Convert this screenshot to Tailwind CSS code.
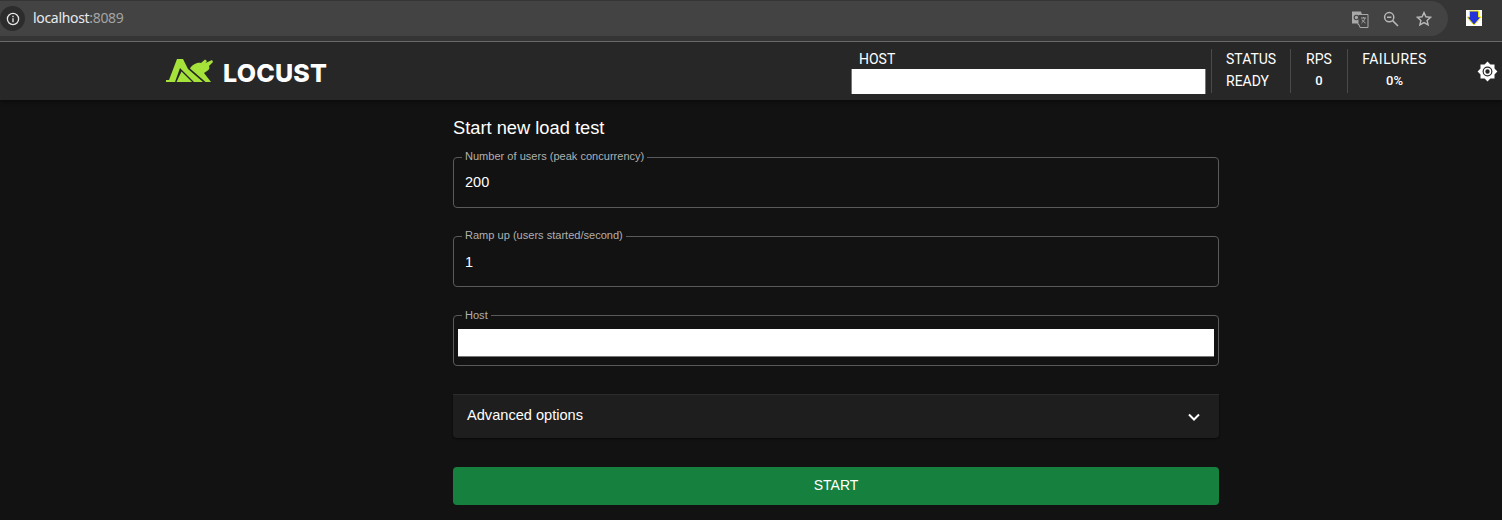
<!DOCTYPE html>
<html lang="en">
<head>
    <meta charset="UTF-8">
    <title>Locust</title>
    <script src="https://cdn.jsdelivr.net/npm/@tailwindcss/browser@4"></script>
</head>
<body class="w-[1502px] h-[520px] overflow-hidden bg-[#121212] text-white font-['Roboto',sans-serif]">

    <!-- browser bar -->
    <div class="h-[42px] bg-[#353535] border-b border-[#6e6e6e] pt-px flex">
        <div class="w-[1448px] h-[35px] bg-[#434343] rounded-r-[18px] flex items-center">
            <div class="w-[25px] h-[25px] rounded-full bg-[#2c2c2c] flex items-center justify-center">
                <svg width="14" height="14" viewBox="0 0 14 14" fill="none" stroke="#e8e8e8" stroke-width="1.3">
                    <circle cx="7" cy="7" r="5.6"/>
                    <path d="M7 6.2V10.2M7 3.8V5.2"/>
                </svg>
            </div>
            <span class="ml-[8px] -mt-[2px] text-[14px] font-['Noto_Sans',sans-serif] text-[#e8eaed] tracking-[-0.32px]">localhost<span class="text-[#a3a3a3]">:8089</span></span>
            <div class="ml-auto flex items-center">
                <svg width="18" height="18" viewBox="0 0 18 18" class="mr-[14px]">
                    <path d="M1 1.500h9l1 3h-1v9H1z" fill="#a8a8a8"/>
                    <path d="M7 4.500h10v13H9l-1-3H7z" fill="#434343" stroke="#a8a8a8" stroke-width="1"/>
                    <path d="M10 8h5M12.500 7v1M14 8c-.5 2-2 4-3.500 5M11 9.500c.8 1.500 2 2.800 3.500 3.500" stroke="#a8a8a8" stroke-width="1" fill="none"/>
                    <circle cx="5.400" cy="7.500" r="2.200" fill="none" stroke="#434343" stroke-width="1.100"/>
                </svg>
                <svg width="16" height="16" viewBox="0 0 16 16" fill="none" stroke="#b8b8b8" stroke-width="1.5" class="mr-[17px]">
                    <circle cx="6.200" cy="6.200" r="4.600"/>
                    <path d="M9.600 9.600L15 15M4 6.200h4.400"/>
                </svg>
                <svg width="16" height="16" viewBox="0 0 16 16" fill="none" stroke="#b8b8b8" stroke-width="1.4" class="mr-[16px]">
                    <path d="M8 1.600l1.900 4.200 4.600.5-3.400 3.100 1 4.500L8 11.600l-4.100 2.300 1-4.500L1.500 6.300l4.600-.5z"/>
                </svg>
            </div>
        </div>
        <svg width="16" height="16" viewBox="0 0 16 16" class="ml-[18px] mt-[9px]">
            <rect width="16" height="16" fill="#fff"/>
            <path d="M3.500 1h9v6h2.500L8 15 1 7h2.500z" fill="#2534d8" stroke="#f4e600" stroke-width="1"/>
        </svg>
    </div>

    <!-- app header -->
    <header class="h-[58px] bg-[#272727] flex items-center shadow-[0_2px_4px_rgba(0,0,0,0.4)]">
        <div class="ml-[166px] flex items-center w-[685px]">
            <svg width="48" height="24" viewBox="0 0 48 24" fill="#a6e33a">
                <path d="M11 0H17L22 10 37 23H28L14 9 9 23H0V21H3Z"/>
                <path d="M15.500 12.500L26 23H10.500Z"/>
                <path d="M24 9.500C26 6 31 3 35 4L39 .5 41 2 39.500 4 46 1 47 3 43 7C44 9 43 11 41 12L38 14 45 23H39.500Z"/>
            </svg>
            <span class="ml-[9px] mt-[5px] text-[25px] leading-none font-extrabold font-['Inter',sans-serif] tracking-[0.2px]">LOCUST</span>
        </div>
        <div class="w-[355px] h-[50px] flex flex-col">
            <span class="ml-2 text-[14px] leading-[20px] mt-[3px]">HOST</span>
            <div class="h-[25px] bg-white border-x border-[#777]"></div>
        </div>
        <div class="ml-[5px] h-[44px] border-l border-[#4a4a4a] w-[79px] pl-[14px] text-[14px] leading-[22px]">
            <p class="-mt-px">STATUS</p>
            <p>READY</p>
        </div>
        <div class="h-[44px] border-l border-[#4a4a4a] w-[57px] text-center text-[14px] leading-[22px]">
            <p class="-mt-px">RPS</p>
            <p class="text-[13px] font-medium">0</p>
        </div>
        <div class="h-[44px] border-l border-[#4a4a4a] w-[94px] text-center text-[14px] leading-[22px]">
            <p class="-mt-px tracking-[0.5px]">FAILURES</p>
            <p class="text-[13px] font-medium">0%</p>
        </div>
        <svg width="21" height="21" viewBox="0 0 24 24" class="ml-[36px]">
            <path fill="#fff" d="M20 8.690V4h-4.690L12 .69 8.690 4H4v4.690L.69 12 4 15.310V20h4.690L12 23.310 15.310 20H20v-4.690L23.310 12 20 8.690z"/>
            <circle cx="12" cy="12" r="5.600" fill="#272727"/>
            <circle cx="12" cy="12" r="3.400" fill="none" stroke="#fff" stroke-width="1.800"/>
        </svg>
    </header>

    <!-- form -->
    <main class="w-[766px] ml-[453px] font-['Liberation_Sans',sans-serif]">
        <h1 class="mt-[17px] text-[18.300px] leading-[22px]">Start new load test</h1>

        <fieldset class="mt-[12px] h-[57px] border border-[#5a5a5a] rounded px-[8px]">
            <legend class="px-[3px] text-[11.050px] leading-[13px] text-[#b0b0b0] -translate-y-px">Number of users (peak concurrency)</legend>
            <p class="ml-[3px] mt-[8px] text-[14.500px] leading-[20px]">200</p>
        </fieldset>

        <fieldset class="mt-[22px] h-[57px] border border-[#5a5a5a] rounded px-[8px]">
            <legend class="px-[3px] text-[11.050px] leading-[13px] text-[#b0b0b0] -translate-y-px">Ramp up (users started/second)</legend>
            <p class="ml-[3px] mt-[9px] text-[14.500px] leading-[20px]">1</p>
        </fieldset>

        <fieldset class="mt-[22px] h-[57px] border border-[#5a5a5a] rounded px-[4px]">
            <legend class="ml-[4px] px-[3px] text-[11.050px] leading-[13px] text-[#b0b0b0]">Host</legend>
            <div class="mt-[7px] h-[28px] bg-white border-b border-[#777]"></div>
        </fieldset>

        <div class="mt-[28px] h-[44px] bg-[#1e1e1e] border-t border-[#2c2c2c] rounded-b flex items-center justify-between pl-[14px] pr-[18px] shadow-[0_1px_2px_rgba(0,0,0,0.5)]">
            <span class="text-[14.600px] -mt-[2px]">Advanced options</span>
            <svg width="14" height="14" viewBox="0 0 14 14" fill="none" stroke="#fff" stroke-width="2">
                <path d="M2 4.500l5 5 5-5"/>
            </svg>
        </div>

        <button class="mt-[29px] pb-[2px] w-full h-[38px] bg-[#16803f] rounded text-[14px] flex items-center justify-center">START</button>
    </main>

</body>
</html>
